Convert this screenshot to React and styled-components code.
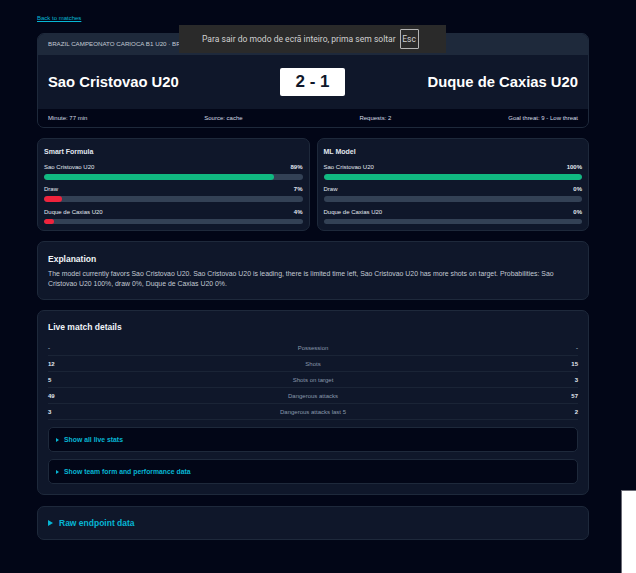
import React from "react";
import styled, { createGlobalStyle } from "styled-components";

const GlobalStyle = createGlobalStyle`
  html, body {
    margin: 0;
    padding: 0;
    background: #020617;
    font-family: "Liberation Sans", Arial, sans-serif;
    overflow: hidden;
  }
`;

const smart = [
  { label: "Sao Cristovao U20", value: 89, good: true },
  { label: "Draw", value: 7 },
  { label: "Duque de Caxias U20", value: 4 },
];

const ml = [
  { label: "Sao Cristovao U20", value: 100, good: true },
  { label: "Draw", value: 0 },
  { label: "Duque de Caxias U20", value: 0 },
];

const stats = [
  ["-", "Possession", "-"],
  ["12", "Shots", "15"],
  ["5", "Shots on target", "3"],
  ["49", "Dangerous attacks", "57"],
  ["3", "Dangerous attacks last 5", "2"],
];

const ModelCard = ({ title, rows }) => (
  <SmallCard>
    <SmallTitle>{title}</SmallTitle>
    {rows.map((row) => (
      <BarRow key={row.label}>
        <BarLabels>
          <span>{row.label}</span>
          <BarValue>{row.value}%</BarValue>
        </BarLabels>
        <Track>
          <Fill $good={row.good} style={{ width: `${row.value}%` }} />
        </Track>
      </BarRow>
    ))}
  </SmallCard>
);

const App = () => {
  return (
    <Page>
      <GlobalStyle />
      <BackLink href="#">Back to matches</BackLink>

      <MatchCard>
        <League>BRAZIL CAMPEONATO CARIOCA B1 U20 · BRAZIL</League>
        <Teams>
          <TeamName>Sao Cristovao U20</TeamName>
          <Score>2 - 1</Score>
          <TeamName>Duque de Caxias U20</TeamName>
        </Teams>
        <MetaRow>
          <span>Minute: 77 min</span>
          <span>Source: cache</span>
          <span>Requests: 2</span>
          <span>Goal threat: 9 - Low threat</span>
        </MetaRow>
      </MatchCard>

      <Models>
        <ModelCard title="Smart Formula" rows={smart} />
        <ModelCard title="ML Model" rows={ml} />
      </Models>

      <ExplainCard>
        <SectionTitle>Explanation</SectionTitle>
        <Explain>
          The model currently favors Sao Cristovao U20. Sao Cristovao U20 is leading, there is
          limited time left, Sao Cristovao U20 has more shots on target. Probabilities: Sao
          Cristovao U20 100%, draw 0%, Duque de Caxias U20 0%.
        </Explain>
      </ExplainCard>

      <DetailsCard>
        <DetailsTitle>Live match details</DetailsTitle>
        <StatTable>
          {stats.map(([home, label, away]) => (
            <StatRow key={label}>
              <StatValue $dim={home === "-"}>{home}</StatValue>
              <StatLabel>{label}</StatLabel>
              <StatValue $right $dim={away === "-"}>{away}</StatValue>
            </StatRow>
          ))}
        </StatTable>
        <Disclosure>
          <Caret />
          Show all live stats
        </Disclosure>
        <Disclosure>
          <Caret />
          Show team form and performance data
        </Disclosure>
      </DetailsCard>

      <RawCard>
        <Caret $large />
        Raw endpoint data
      </RawCard>

      <FullscreenNotice>
        Para sair do modo de ecrã inteiro, prima sem soltar
        <EscKey>Esc</EscKey>
      </FullscreenNotice>
      <CornerBlock />
    </Page>
  );
};

export default App;

const Page = styled.div`
  position: relative;
  box-sizing: border-box;
  width: 636px;
  height: 573px;
  padding: 15px 47px 0 37px;
  overflow: hidden;
  background: #020617;
`;

const BackLink = styled.a`
  display: block;
  height: 18px;
  font-size: 6px;
  line-height: 7px;
  color: #06b6d4;
  text-decoration: underline;
`;

const MatchCard = styled.section`
  box-sizing: border-box;
  height: 95px;
  margin-bottom: 10px;
  background: #0f172a;
  border: 1px solid #1e293b;
  border-radius: 7px;
  overflow: hidden;
`;

const League = styled.div`
  box-sizing: border-box;
  height: 21px;
  padding: 0 10px;
  background: #1e293b;
  color: #c3cad4;
  font-size: 6.2px;
  line-height: 20px;
  white-space: nowrap;
`;

const Teams = styled.div`
  height: 54px;
  padding: 0 10px;
  display: grid;
  grid-template-columns: 222px 65px 1fr;
  align-items: center;
  column-gap: 10px;

  & > :last-child {
    text-align: right;
  }
`;

const TeamName = styled.div`
  font-size: 14.8px;
  font-weight: 700;
  color: #ffffff;
  white-space: nowrap;
`;

const Score = styled.div`
  height: 28px;
  line-height: 28px;
  background: #ffffff;
  border-radius: 2px;
  color: #0f172a;
  font-size: 17px;
  font-weight: 700;
  text-align: center;
`;

const MetaRow = styled.div`
  height: 18px;
  padding: 0 10px;
  display: flex;
  justify-content: space-between;
  align-items: center;
  background: #020617;
  color: #d5dbe4;
  font-size: 6px;
`;

const Models = styled.div`
  display: grid;
  grid-template-columns: 1fr 1fr;
  column-gap: 7px;
  margin-bottom: 10px;
`;

const SmallCard = styled.section`
  box-sizing: border-box;
  height: 93px;
  padding: 9px 6px 0;
  background: #0f172a;
  border: 1px solid #1e293b;
  border-radius: 7px;
`;

const SmallTitle = styled.div`
  height: 16px;
  font-size: 7px;
  line-height: 8px;
  font-weight: 700;
  color: #e2e8f0;
`;

const BarRow = styled.div`
  height: 22.4px;
`;

const BarLabels = styled.div`
  display: flex;
  justify-content: space-between;
  height: 10px;
  font-size: 6px;
  line-height: 7px;
  color: #e2e8f0;
`;

const BarValue = styled.span`
  font-weight: 700;
`;

const Track = styled.div`
  height: 5.5px;
  background: #334155;
  border-radius: 3px;
  overflow: hidden;
`;

const Fill = styled.div`
  height: 100%;
  background: ${(p) => (p.$good ? "#10b981" : "#ef233c")};
  border-radius: 3px;
`;

const ExplainCard = styled.section`
  box-sizing: border-box;
  height: 59px;
  margin-bottom: 10px;
  padding: 11px 10px 0;
  background: #0f172a;
  border: 1px solid #1e293b;
  border-radius: 7px;
`;

const SectionTitle = styled.h2`
  margin: 0 0 4px;
  font-size: 8.5px;
  line-height: 12px;
  color: #f1f5f9;
`;

const Explain = styled.p`
  margin: 0;
  font-size: 6.9px;
  line-height: 10.3px;
  color: #c3cad4;
`;

const DetailsCard = styled.section`
  box-sizing: border-box;
  height: 185px;
  margin-bottom: 11px;
  padding: 11px 10px 0;
  background: #0f172a;
  border: 1px solid #1e293b;
  border-radius: 7px;
`;

const DetailsTitle = styled.h2`
  margin: 0 0 7px;
  font-size: 8.5px;
  line-height: 11px;
  color: #f1f5f9;
`;

const StatTable = styled.div`
  margin-bottom: 7px;
`;

const StatRow = styled.div`
  display: grid;
  grid-template-columns: 1fr 2fr 1fr;
  height: 16.1px;
  align-items: center;
  border-bottom: 1px solid #1a2436;
  box-sizing: border-box;
`;

const StatValue = styled.span`
  font-size: 6px;
  font-weight: 700;
  color: ${(p) => (p.$dim ? "#94a3b8" : "#e2e8f0")};
  text-align: ${(p) => (p.$right ? "right" : "left")};
`;

const StatLabel = styled.span`
  font-size: 6px;
  color: #8a97aa;
  text-align: center;
`;

const Disclosure = styled.div`
  box-sizing: border-box;
  display: flex;
  align-items: center;
  height: 25px;
  margin-bottom: 7px;
  padding: 0 7px;
  background: #020617;
  border: 1px solid #1e293b;
  border-radius: 5px;
  font-size: 6.85px;
  font-weight: 700;
  color: #06b6d4;
`;

const Caret = styled.span`
  width: 0;
  height: 0;
  margin-right: ${(p) => (p.$large ? "6px" : "5px")};
  border-left: ${(p) => (p.$large ? "5px" : "3.5px")} solid #06b6d4;
  border-top: ${(p) => (p.$large ? "3px" : "2px")} solid transparent;
  border-bottom: ${(p) => (p.$large ? "3px" : "2px")} solid transparent;
`;

const RawCard = styled.section`
  box-sizing: border-box;
  display: flex;
  align-items: center;
  height: 34px;
  padding: 0 10px;
  background: #0f172a;
  border: 1px solid #1e293b;
  border-radius: 7px;
  font-size: 8.5px;
  font-weight: 700;
  color: #06b6d4;
`;

const FullscreenNotice = styled.div`
  position: absolute;
  left: 179px;
  top: 25px;
  box-sizing: border-box;
  width: 267px;
  height: 28px;
  padding-left: 23px;
  display: flex;
  align-items: center;
  gap: 4px;
  background: #2a2a2a;
  color: #d0d0d0;
  font-family: "Roboto", sans-serif;
  font-size: 8.55px;
  white-space: nowrap;
`;

const EscKey = styled.span`
  box-sizing: border-box;
  width: 19px;
  height: 20px;
  line-height: 18px;
  text-align: center;
  border: 1px solid #b4b4b4;
  border-radius: 1px;
`;

const CornerBlock = styled.div`
  position: absolute;
  left: 621px;
  top: 490px;
  width: 15px;
  height: 83px;
  box-sizing: border-box;
  background: #ffffff;
  border-top: 1px solid #6b6b75;
  border-left: 1px solid #6b6b75;
`;
